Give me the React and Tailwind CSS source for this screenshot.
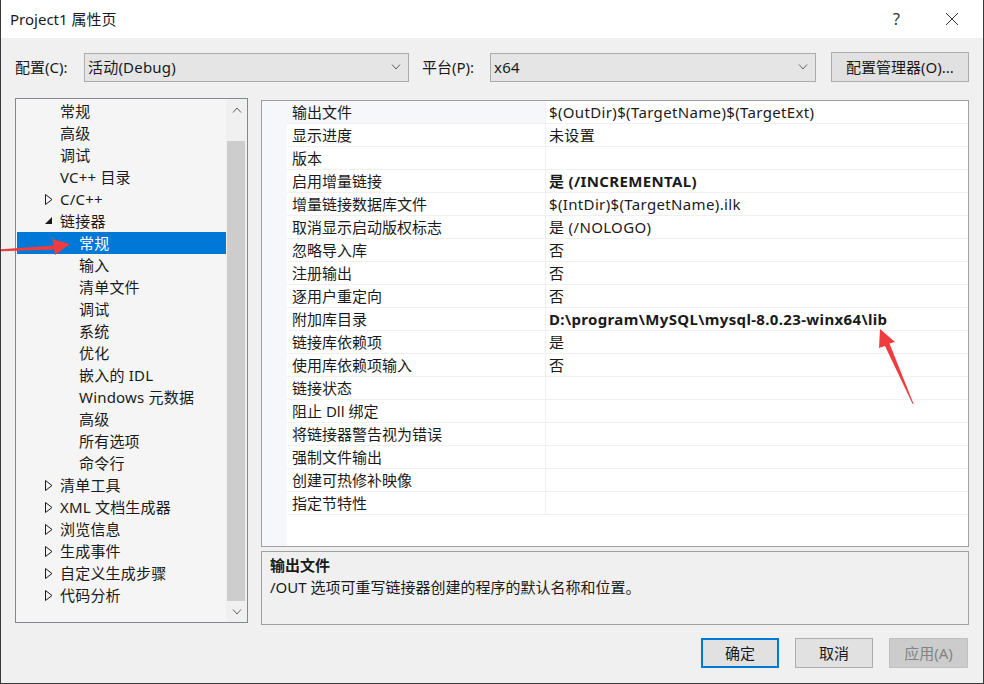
import React from "react";

const FONT = "font-['Noto_Sans','Noto_Sans_CJK_SC',sans-serif]";

const tree = [
  { t: "常规", lvl: 1 },
  { t: "高级", lvl: 1 },
  { t: "调试", lvl: 1 },
  { t: "VC++ 目录", lvl: 1 },
  { t: "C/C++", lvl: 1, arrow: "c" },
  { t: "链接器", lvl: 1, arrow: "e" },
  { t: "常规", lvl: 2, sel: true },
  { t: "输入", lvl: 2 },
  { t: "清单文件", lvl: 2 },
  { t: "调试", lvl: 2 },
  { t: "系统", lvl: 2 },
  { t: "优化", lvl: 2 },
  { t: "嵌入的 IDL", lvl: 2 },
  { t: "Windows 元数据", lvl: 2 },
  { t: "高级", lvl: 2 },
  { t: "所有选项", lvl: 2 },
  { t: "命令行", lvl: 2 },
  { t: "清单工具", lvl: 1, arrow: "c" },
  { t: "XML 文档生成器", lvl: 1, arrow: "c" },
  { t: "浏览信息", lvl: 1, arrow: "c" },
  { t: "生成事件", lvl: 1, arrow: "c" },
  { t: "自定义生成步骤", lvl: 1, arrow: "c" },
  { t: "代码分析", lvl: 1, arrow: "c" },
];

const rows = [
  ["输出文件", "$(OutDir)$(TargetName)$(TargetExt)"],
  ["显示进度", "未设置"],
  ["版本", ""],
  ["启用增量链接", "是 (/INCREMENTAL)", true],
  ["增量链接数据库文件", "$(IntDir)$(TargetName).ilk"],
  ["取消显示启动版权标志", "是 (/NOLOGO)"],
  ["忽略导入库", "否"],
  ["注册输出", "否"],
  ["逐用户重定向", "否"],
  ["附加库目录", "D:\\program\\MySQL\\mysql-8.0.23-winx64\\lib", true],
  ["链接库依赖项", "是"],
  ["使用库依赖项输入", "否"],
  ["链接状态", ""],
  ["阻止 Dll 绑定", ""],
  ["将链接器警告视为错误", ""],
  ["强制文件输出", ""],
  ["创建可热修补映像", ""],
  ["指定节特性", ""],
];

function Chevron({ down = true, className = "" }) {
  return (
    <svg width="10" height="6" viewBox="0 0 10 6" className={className}>
      <polyline
        points={down ? "1,0.5 5,5 9,0.5" : "1,5.5 5,1 9,5.5"}
        fill="none"
        stroke="currentColor"
        strokeWidth="1"
      />
    </svg>
  );
}

function Arrow({ kind }) {
  if (kind === "c")
    return (
      <svg width="8" height="11" viewBox="0 0 8 11">
        <polygon points="0.5,0.5 7,5.5 0.5,10.5" fill="none" stroke="#1a1a1a" strokeWidth="1" />
      </svg>
    );
  if (kind === "e")
    return (
      <svg width="8" height="8" viewBox="0 0 8 8">
        <polygon points="7,0 7,7 0,7" fill="#1a1a1a" />
      </svg>
    );
  return null;
}

function Combo({ text, w }) {
  return (
    <div className={`${w} h-[29px] bg-[#e5e5e5] border border-[#acacac] flex items-center pl-[3px] pr-[7px]`}>
      <span className="flex-1 text-[15px] text-[#1a1a1a] tracking-[0.2px]">{text}</span>
      <Chevron className="text-[#606060]" />
    </div>
  );
}

export default function App() {
  return (
    <div className={`${FONT} relative w-[984px] h-[684px] bg-[#f0f0f0] border-x border-b border-[#3a3a3a] flex flex-col text-[#1a1a1a] overflow-hidden`}>
      {/* title bar */}
      <div className="h-[38px] bg-white flex items-center pl-[9px] shrink-0">
        <span className="text-[15px] flex-1">Project1 属性页</span>
        <span className="text-[16px] text-[#333] mr-[45px]">?</span>
        <svg width="14" height="14" viewBox="0 0 14 14" className="mr-[24px]">
          <path d="M1 1 L13 13 M13 1 L1 13" stroke="#333" strokeWidth="1" />
        </svg>
      </div>

      {/* config row */}
      <div className="mt-[14px] h-[30px] flex items-center pl-[14px] shrink-0">
        <span className="w-[69px] text-[15px]">配置(C):</span>
        <Combo text="活动(Debug)" w="w-[325px]" />
        <span className="ml-[13px] w-[68px] text-[15px]">平台(P):</span>
        <Combo text="x64" w="w-[326px]" />
        <button className="ml-[15px] w-[138px] h-[30px] bg-[#e1e1e1] border border-[#adadad] text-[15px] flex items-center justify-center">
          配置管理器(O)...
        </button>
      </div>

      {/* main */}
      <div className="mt-[16px] flex pl-[14px] shrink-0">
        {/* tree */}
        <div className="w-[233px] h-[525px] border border-[#828790] bg-[#f5f5f5] flex">
          <div className="flex-1 pt-[1px]">
            {tree.map((it, i) => (
              <div
                key={i}
                className={`h-[22px] flex items-center ml-[1px] ${it.sel ? "bg-[#0078d7] text-white" : ""} ${it.lvl === 1 ? "pl-[28px]" : "pl-[47px]"}`}
              >
                <span className="w-[15px] flex items-center">
                  <Arrow kind={it.arrow} />
                </span>
                <span className="text-[15px] leading-[22px] whitespace-nowrap tracking-[0.2px]">{it.t}</span>
              </div>
            ))}
          </div>
          <div className="w-[21px] flex flex-col bg-[#f0f0f0]">
            <div className="h-[42px] flex justify-center pt-[8px] text-[#606060]">
              <Chevron down={false} />
            </div>
            <div className="flex-1 bg-[#cdcdcd] ml-[1px] mr-[2px]" />
            <div className="h-[21px] flex justify-center items-center text-[#606060]">
              <Chevron />
            </div>
          </div>
        </div>

        {/* right column */}
        <div className="ml-[13px] pt-[2px] flex flex-col">
          <div className="w-[708px] h-[447px] border border-[#a0a0a0] bg-white flex">
            <div className="w-[25px] bg-[#f5f7fb]" />
            <div className="flex-1">
              {rows.map(([n, v, b], i) => (
                <div key={i} className="h-[23px] flex border-b border-[#f0f0f0]">
                  <div className={`w-[259px] border-r border-[#f0f0f0] pl-[5px] flex items-center text-[15px] whitespace-nowrap ${i === 0 ? "bg-[#f5f7fb]" : ""}`}>
                    {n}
                  </div>
                  <div className={`flex-1 pl-[3px] flex items-center text-[15px] whitespace-nowrap tracking-[0.35px] ${b ? "font-bold" : ""}`}>
                    {v}
                  </div>
                </div>
              ))}
            </div>
          </div>
          <div className="mt-[4px] w-[708px] h-[74px] border border-[#a0a0a0] bg-[#f0f0f0] pl-[8px] pt-[2px]">
            <div className="text-[15px] font-bold h-[22px] leading-[22px]">输出文件</div>
            <div className="text-[15px] h-[22px] leading-[22px]">/OUT 选项可重写链接器创建的程序的默认名称和位置。</div>
          </div>
        </div>
      </div>

      {/* buttons */}
      <div className="mt-[13px] flex justify-end gap-[16px] pr-[15px] shrink-0">
        <button className="w-[78px] h-[30px] bg-[#e1e1e1] border-2 border-[#0078d7] text-[15px] flex items-center justify-center">确定</button>
        <button className="w-[78px] h-[30px] bg-[#e1e1e1] border border-[#adadad] text-[15px] flex items-center justify-center">取消</button>
        <button className="w-[79px] h-[30px] bg-[#cccccc] border border-[#bfbfbf] text-[15px] text-[#838383] flex items-center justify-center">应用(A)</button>
      </div>

      {/* red annotation arrows */}
      <svg className="absolute left-[-1px] top-0 pointer-events-none" width="984" height="684" viewBox="0 0 984 684">
        <polygon points="0,249.2 54,245.5 52,239 70,244 55,255 54,249.5 0,251.2" fill="#f03c3c" />
        <polygon points="880,329 895,342 889.5,343.5 913.6,404 912.6,404 885,346 879,348" fill="#f03c3c" />
      </svg>
    </div>
  );
}
